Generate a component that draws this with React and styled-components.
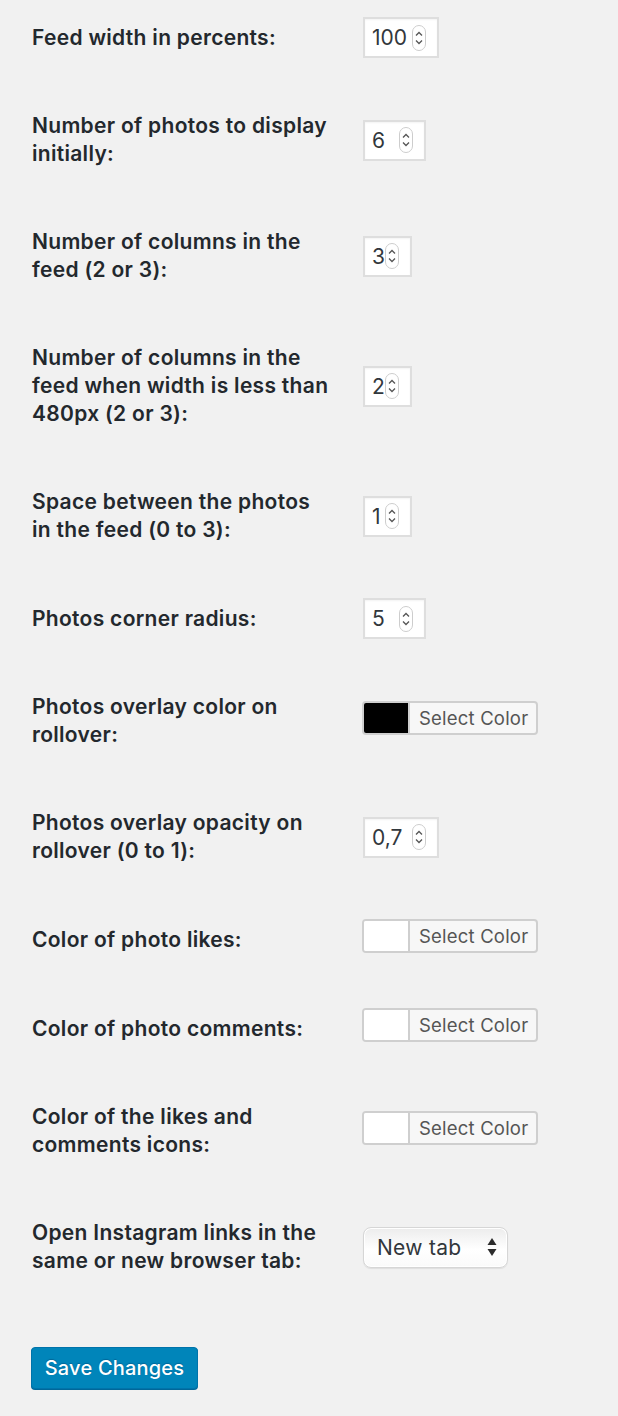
import styled, { createGlobalStyle } from "styled-components";

const GlobalStyle = createGlobalStyle`
  html, body {
    margin: 0;
    padding: 0;
    background: #f1f1f1;
  }
  body {
    font-family: Inter, "Noto Sans", "Liberation Sans", sans-serif;
    color: #23282d;
  }
`;

const Page = styled.form`
  padding: 0 0 0 32px;
  margin-top: -7px;
`;

const FormTable = styled.table`
  border-collapse: collapse;
  border-spacing: 0;
`;

const Label = styled.th`
  width: 300px;
  padding: 30px 31px 30px 0;
  text-align: left;
  vertical-align: middle;
  font-size: 21px;
  font-weight: 600;
  line-height: 28px;
  letter-spacing: 0.3px;
  color: #23282d;
`;

const Field = styled.td`
  padding: 24px 0;
  vertical-align: middle;
`;

const NumberBox = styled.div`
  box-sizing: border-box;
  display: flex;
  align-items: center;
  width: ${(p) => p.$width}px;
  height: 41px;
  padding: 0 11px 0 7px;
  background: #fff;
  border: 2px solid #dedede;
  box-shadow: inset 0 1px 2px rgba(0, 0, 0, 0.05);
  font-size: 21px;
  color: #32373c;
`;

const NumberValue = styled.span`
  flex: 1;
  white-space: nowrap;
`;

const ColorButton = styled.div`
  box-sizing: border-box;
  display: flex;
  width: 176px;
  height: 34px;
  margin: 0 0 7px -1px;
  border: 2px solid #cfcfcf;
  border-radius: 4px;
  background: #f7f7f7;
  overflow: hidden;
`;

const Swatch = styled.span`
  width: 44px;
  background: ${(p) => p.$color};
  border-right: 2px solid #cfcfcf;
`;

const ColorLabel = styled.span`
  display: flex;
  align-items: center;
  padding-left: 9px;
  font-size: 18.5px;
  letter-spacing: 0.2px;
  color: #555;
`;

const SelectBox = styled.div`
  box-sizing: border-box;
  display: flex;
  align-items: center;
  justify-content: space-between;
  width: 145px;
  height: 41px;
  padding: 0 10px 0 13px;
  border: 1px solid #d6d6d6;
  border-radius: 8px;
  background: linear-gradient(#ececec, #ffffff 55%, #fafafa);
  box-shadow: 0 1px 1px rgba(0, 0, 0, 0.08), inset 0 0 0 1px #fff;
  font-size: 21px;
  letter-spacing: 0.3px;
  color: #32373c;
`;

const Submit = styled.p`
  margin: 42px 0 0 -1px;
  padding: 0 0 26px;
`;

const SaveButton = styled.button`
  box-sizing: border-box;
  width: 167px;
  height: 42px;
  padding: 0;
  border: 1px solid #0073aa;
  border-radius: 4px;
  background: #0085ba;
  box-shadow: 0 1px 0 #006799;
  color: #fff;
  font-family: Inter, "Noto Sans", sans-serif;
  font-size: 20px;
  font-weight: 500;
  letter-spacing: 0.2px;
  text-shadow: 0 -1px 1px #006799;
`;

const Spinner = () => (
  <svg width="14" height="26" viewBox="0 0 14 26">
    <rect x="0.5" y="0.5" width="13" height="25" rx="6.5" fill="#fff" stroke="#cdcdcd" />
    <path d="M4 10.5 L7 7.5 L10 10.5" fill="none" stroke="#555" strokeWidth="1.3" />
    <path d="M4 15.5 L7 18.5 L10 15.5" fill="none" stroke="#555" strokeWidth="1.3" />
  </svg>
);

const SelectArrows = () => (
  <svg width="10" height="22" viewBox="0 0 10 22">
    <path d="M5 2 L9.5 9 L0.5 9 Z" fill="#2c2c2c" />
    <path d="M0.5 13 L9.5 13 L5 20 Z" fill="#2c2c2c" />
  </svg>
);

const NumberInput = ({ value, width }) => (
  <NumberBox $width={width}>
    <NumberValue>{value}</NumberValue>
    <Spinner />
  </NumberBox>
);

const ColorPicker = ({ color }) => (
  <ColorButton>
    <Swatch $color={color} />
    <ColorLabel>Select Color</ColorLabel>
  </ColorButton>
);

const rows = [
  { label: "Feed width in percents:", type: "number", value: "100", width: 76 },
  { label: "Number of photos to display initially:", type: "number", value: "6", width: 63 },
  { label: "Number of columns in the feed (2 or 3):", type: "number", value: "3", width: 49 },
  {
    label: "Number of columns in the feed when width is less than 480px (2 or 3):",
    type: "number",
    value: "2",
    width: 49,
  },
  { label: "Space between the photos in the feed (0 to 3):", type: "number", value: "1", width: 49 },
  { label: "Photos corner radius:", type: "number", value: "5", width: 63 },
  { label: "Photos overlay color on rollover:", type: "color", color: "#000" },
  { label: "Photos overlay opacity on rollover (0 to 1):", type: "number", value: "0,7", width: 76 },
  { label: "Color of photo likes:", type: "color", color: "#fff" },
  { label: "Color of photo comments:", type: "color", color: "#fff" },
  { label: "Color of the likes and comments icons:", type: "color", color: "#fff" },
  { label: "Open Instagram links in the same or new browser tab:", type: "select", value: "New tab" },
];

export default function App() {
  return (
    <>
      <GlobalStyle />
      <Page onSubmit={(e) => e.preventDefault()}>
        <FormTable>
          <tbody>
            {rows.map((row) => (
              <tr key={row.label}>
                <Label scope="row">{row.label}</Label>
                <Field>
                  {row.type === "number" && <NumberInput value={row.value} width={row.width} />}
                  {row.type === "color" && <ColorPicker color={row.color} />}
                  {row.type === "select" && (
                    <SelectBox>
                      <span>{row.value}</span>
                      <SelectArrows />
                    </SelectBox>
                  )}
                </Field>
              </tr>
            ))}
          </tbody>
        </FormTable>
        <Submit>
          <SaveButton type="submit">Save Changes</SaveButton>
        </Submit>
      </Page>
    </>
  );
}
